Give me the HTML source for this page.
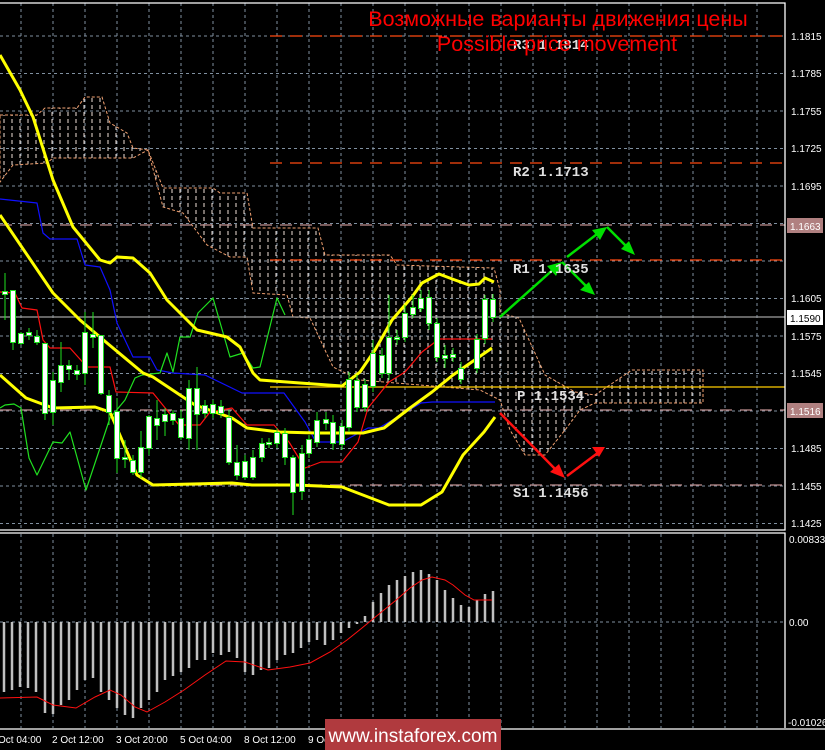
<!DOCTYPE html>
<html><head><meta charset="utf-8"><style>
html,body{margin:0;padding:0;background:#000;width:825px;height:750px;overflow:hidden}
svg{display:block}
.ax{font-family:"Liberation Sans",sans-serif;font-size:10px;fill:#fff}
.lb{font-family:"Liberation Mono",monospace;font-size:14px;font-weight:bold;fill:#e0e0e0}
</style></head><body>
<svg width="825" height="750" viewBox="0 0 825 750" xmlns="http://www.w3.org/2000/svg">
<defs>
<pattern id="cl" width="8" height="7" patternUnits="userSpaceOnUse">
<line x1="4" y1="0" x2="4" y2="4" stroke="#f0e0d8" stroke-width="1"/>
</pattern>
</defs>
<rect width="825" height="750" fill="#000"/>
<g stroke="#8090a0" stroke-width="1" stroke-dasharray="3,3">
<path d="M0,36H785M0,73.5H785M0,111H785M0,148.5H785M0,186H785M0,223.5H785M0,261H785M0,298.5H785M0,336H785M0,373.5H785M0,411H785M0,448.5H785M0,486H785M0,523.5H785M0,622H785"/>
<path d="M21,3V530M53,3V530M85,3V530M117,3V530M149,3V530M181,3V530M213,3V530M245,3V530M277,3V530M309,3V530M341,3V530M373,3V530M405,3V530M437,3V530M469,3V530M501,3V530M533,3V530M565,3V530M597,3V530M629,3V530M661,3V530M693,3V530M725,3V530M757,3V530"/>
<path d="M21,534V728M53,534V728M85,534V728M117,534V728M149,534V728M181,534V728M213,534V728M245,534V728M277,534V728M309,534V728M341,534V728M373,534V728M405,534V728M437,534V728M469,534V728M501,534V728M533,534V728M565,534V728M597,534V728M629,534V728M661,534V728M693,534V728M725,534V728M757,534V728"/>
</g>
<polygon points="0,115 37,115 45,108 77,108 85,97 102,97 110,123 127,133 133,148 148,150 163,188 213,188 220,193 247,193 253,228 318,228 325,255 390,255 397,265 494,268 500,290 500,313 519,318 529,340 545,375 575,392 595,395 632,370 703,370 703,403 595,403 580,410 565,430 545,455 525,455 510,430 500,400 480,390 420,385 360,380 333,367 310,318 293,317 287,295 253,293 247,257 230,257 207,245 183,213 163,207 148,150 133,158 53,158 47,163 13,165 0,182" fill="url(#cl)" stroke="#f0a070" stroke-width="1" stroke-dasharray="3,2"/>
<g stroke-width="1.3" stroke-dasharray="12,8" fill="none">
<path d="M270,36H785M270,163H785M270,260H785" stroke="#ff4a10"/>
<path d="M0,225H785M0,410H785M170,485H785" stroke="#c09090"/>
</g>
<path d="M270,387H785" stroke="#ffcc00" stroke-width="1.3"/>
<path d="M0,317H785" stroke="#a0a0a0" stroke-width="1.3"/>
<g fill="none" stroke-width="1.2" stroke-linejoin="round">
<polyline stroke="#1010ff" points="0,199 37,203 43,233 50,239 77,239 85,265 100,267 110,290 117,323 133,357 150,357 157,370 173,373 205,375 242,393 284,393 305,422 316,442 342,442 368,428 379,428 421,403 432,402 495,402"/>
<polyline stroke="#ff1010" points="0,292 15,293 22,308 37,310 43,340 50,348 70,348 87,367 110,367 116,392 153,393 179,425 200,425 210,412 232,408 247,425 274,425 289,442 305,468 321,462 342,462 358,442 368,408 389,382 405,372 422,352 439,339 492,339"/>
<polyline stroke="#20e020" points="0,408 5,405 14,404 21,408 29,458 37,475 53,442 62,443 70,432 86,490 110,418 125,400 135,378 142,375 160,373 167,353 173,372 180,337 190,337 198,313 213,298 230,357 243,353 253,368 260,367 277,298 285,315"/>
</g>
<g fill="none" stroke="#ffff00" stroke-width="3" stroke-linejoin="round">
<polyline points="0,55 20,90 33,117 53,180 73,227 100,260 110,263 117,257 133,258 150,273 167,300 197,330 227,337 240,347 253,373 260,380 300,383 342,386 360,372 375,350 392,320 412,297 422,283 439,274 455,280 469,285 479,284 485,278 494,282"/>
<polyline points="0,215 53,293 80,320 107,343 143,373 153,377 195,405 232,418 247,428 279,432 316,433 363,433 384,428 410,408 432,392 453,375 479,357 492,348"/>
<polyline points="0,375 26,398 53,408 95,407 110,412 137,475 153,485 232,483 252,485 295,485 342,487 389,505 421,505 442,492 463,455 484,432 495,417"/>
</g>
<g stroke="#20e020" stroke-width="1" fill="#fff">
<path fill="none" d="M5,273V320M13,290V350M21,332V345M29,328V340M37,330V345M45,343V420M53,372V425M61,342V392M69,360V380M77,365V380M85,312V385M93,312V348M101,335V395M109,390V425M117,398V473M125,440V468M133,455V475M141,431V478M149,415V455M157,400V440M165,408V436M173,410V425M181,410V440M189,380V450M197,367V450M205,400V418M213,400V418M221,400V418M229,410V465M237,445V480M245,455V480M253,450V480M262,438V462M269,438V448M277,428V448M285,428V465M293,455V515M302,445V500M309,435V458M317,412V447M326,412V430M333,415V450M342,420V450M349,372V432M357,375V412M365,379V412M373,340V392M382,348V378M389,295V380M397,330V345M405,305V342M413,295V318M421,290V312M429,290V330M437,318V362M445,345V368M453,348V362M461,362V384M477,334V373M485,295V344M493,294V322"/>
<rect x="2.5" y="291.5" width="5" height="3"/><rect x="10.5" y="290.5" width="5" height="52"/><rect x="18.5" y="333.5" width="5" height="10"/><rect x="26.5" y="332.5" width="5" height="3"/><rect x="34.5" y="336.5" width="5" height="6"/><rect x="42.5" y="343.5" width="5" height="70"/><rect x="50.5" y="380.5" width="5" height="32"/><rect x="58.5" y="365.5" width="5" height="17"/><rect x="66.5" y="365.5" width="5" height="4"/><rect x="74.5" y="370.5" width="5" height="4"/><rect x="82.5" y="332.5" width="5" height="41"/><rect x="90.5" y="334.5" width="5" height="3"/><rect x="98.5" y="335.5" width="5" height="58"/><rect x="106.5" y="395.5" width="5" height="17"/><rect x="114.5" y="411.5" width="5" height="47"/><rect x="122.5" y="457.5" width="5" height="2"/><rect x="130.5" y="460.5" width="5" height="12"/><rect x="138.5" y="447.5" width="5" height="25"/><rect x="146.5" y="416.5" width="5" height="32"/><rect x="154.5" y="418.5" width="5" height="7"/><rect x="162.5" y="414.5" width="5" height="7"/><rect x="170.5" y="413.5" width="5" height="7"/><rect x="178.5" y="418.5" width="5" height="19"/><rect x="186.5" y="388.5" width="5" height="50"/><rect x="194.5" y="388.5" width="5" height="26"/><rect x="202.5" y="405.5" width="5" height="8"/><rect x="210.5" y="404.5" width="5" height="9"/><rect x="218.5" y="406.5" width="5" height="7"/><rect x="226.5" y="417.5" width="5" height="45"/><rect x="234.5" y="462.5" width="5" height="13"/><rect x="242.5" y="461.5" width="5" height="16"/><rect x="250.5" y="457.5" width="5" height="20"/><rect x="259.5" y="443.5" width="5" height="14"/><rect x="266.5" y="442.5" width="5" height="2"/><rect x="274.5" y="432.5" width="5" height="11"/><rect x="282.5" y="433.5" width="5" height="24"/><rect x="290.5" y="457.5" width="5" height="35"/><rect x="299.5" y="453.5" width="5" height="38"/><rect x="306.5" y="439.5" width="5" height="14"/><rect x="314.5" y="420.5" width="5" height="22"/><rect x="323.5" y="419.5" width="5" height="4"/><rect x="330.5" y="422.5" width="5" height="21"/><rect x="339.5" y="426.5" width="5" height="18"/><rect x="346.5" y="379.5" width="5" height="48"/><rect x="354.5" y="380.5" width="5" height="27"/><rect x="362.5" y="384.5" width="5" height="23"/><rect x="370.5" y="353.5" width="5" height="33"/><rect x="379.5" y="355.5" width="5" height="18"/><rect x="386.5" y="337.5" width="5" height="36"/><rect x="394.5" y="337.5" width="5" height="2"/><rect x="402.5" y="313.5" width="5" height="24"/><rect x="410.5" y="307.5" width="5" height="7"/><rect x="418.5" y="298.5" width="5" height="10"/><rect x="426.5" y="297.5" width="5" height="26"/><rect x="434.5" y="323.5" width="5" height="34"/><rect x="442.5" y="355.5" width="5" height="3"/><rect x="450.5" y="354.5" width="5" height="3"/><rect x="458.5" y="368.5" width="5" height="11"/><rect x="474.5" y="339.5" width="5" height="29"/><rect x="482.5" y="299.5" width="5" height="39"/><rect x="490.5" y="299.5" width="5" height="18"/>
</g>
<g stroke-width="2.5" fill="none">
<path d="M500,317 L556,267" stroke="#00e000"/><path d="M567,257 L601,231" stroke="#00e000"/>
<path d="M607,227 L629,249" stroke="#00e000"/><path d="M562,262 L589,289" stroke="#00e000"/>
<path d="M500,413 L558,472" stroke="#ff1010"/><path d="M567,476 L599,452" stroke="#ff1010"/>
</g>
<g stroke="none">
<polygon points="562,262 547,266 556,276" fill="#00e000"/>
<polygon points="607,227 592,230 600,240" fill="#00e000"/>
<polygon points="635,255 621,249 629,241" fill="#00e000"/>
<polygon points="595,295 580,290 589,282" fill="#00e000"/>
<polygon points="565,478 550,472 559,464" fill="#ff1010"/>
<polygon points="605,447 592,447 599,457" fill="#ff1010"/>
</g>
<text class="lb" x="513" y="49">R3 1.1814</text>
<text class="lb" x="513" y="176">R2 1.1713</text>
<text class="lb" x="513" y="273">R1 1.1635</text>
<text class="lb" x="517" y="400">P 1.1534</text>
<text class="lb" x="513" y="497">S1 1.1456</text>
<g font-family="Liberation Sans,sans-serif" font-size="21.5" fill="#ff0000" text-anchor="middle">
<text x="558" y="26">Возможные варианты движения цены</text>
<text x="557" y="51">Possible price movement</text>
</g>
<g stroke="#c0c0c0" stroke-width="2.5">
<path d="M4,622V692M12,622V690M20,622V687M28,622V688M36,622V692M45,622V713M53,622V714M61,622V705M69,622V700M77,622V690M85,622V680M93,622V678M101,622V692M109,622V700M117,622V708M125,622V715M133,622V718M141,622V708M149,622V700M157,622V692M165,622V680M173,622V676M181,622V672M189,622V668M197,622V660M205,622V660M213,622V653M221,622V655M229,622V652M237,622V658M245,622V672M253,622V675M261,622V670M269,622V668M277,622V660M285,622V655M293,622V653M301,622V648M309,622V642M317,622V640M325,622V645M333,622V640M341,622V633M349,622V628M357,622V624M365,622V616M373,622V602M381,622V593M389,622V585M397,622V580M405,622V576M413,622V572M421,622V570M429,622V574M437,622V580M445,622V590M453,622V598M461,622V605M469,622V607M477,622V600M485,622V594M493,622V591"/>
</g>
<polyline fill="none" stroke="#ff1010" stroke-width="1" points="0,698 37,697 53,705 76,708 95,697 110,690 121,695 135,707 147,712 165,702 184,690 205,675 226,661 245,662 268,670 290,667 310,663 330,652 347,640 362,628 379,614 395,601 410,588 422,580 432,577 445,580 453,585 465,595 474,600 492,600"/>
<g stroke="#fff" stroke-width="1.3" fill="none">
<path d="M0,3H785V530H0M0,533H785V728M0,729H825"/>
</g>
<g class="ax">
<text x="791" y="40">1.1815</text><text x="791" y="77">1.1785</text><text x="791" y="115">1.1755</text><text x="791" y="152">1.1725</text><text x="791" y="190">1.1695</text>
<text x="791" y="302">1.1605</text><text x="791" y="340">1.1575</text><text x="791" y="377">1.1545</text><text x="791" y="452">1.1485</text><text x="791" y="490">1.1455</text><text x="791" y="527">1.1425</text>
<text x="789" y="543">0.00833</text><text x="789" y="626">0.00</text><text x="788" y="726">-0.01026</text>
</g>
<rect x="787" y="218" width="36" height="15" fill="#b08080"/><text class="ax" x="790" y="230">1.1663</text>
<rect x="787" y="310" width="36" height="15" fill="#fff"/><text class="ax" x="790" y="322" style="fill:#000">1.1590</text>
<rect x="787" y="403" width="36" height="15" fill="#b08080"/><text class="ax" x="790" y="415">1.1516</text>
<g class="ax">
<text x="-2" y="743">Oct 04:00</text><text x="52" y="743">2 Oct 12:00</text><text x="116" y="743">3 Oct 20:00</text><text x="180" y="743">5 Oct 04:00</text><text x="244" y="743">8 Oct 12:00</text><text x="308" y="743">9 Oct</text>
</g>
<rect x="325" y="719" width="176" height="31" fill="#b03a3e"/>
<text x="413" y="742" text-anchor="middle" font-family="Liberation Sans,sans-serif" font-size="19" fill="#fff">www.instaforex.com</text>
</svg>
</body></html>
